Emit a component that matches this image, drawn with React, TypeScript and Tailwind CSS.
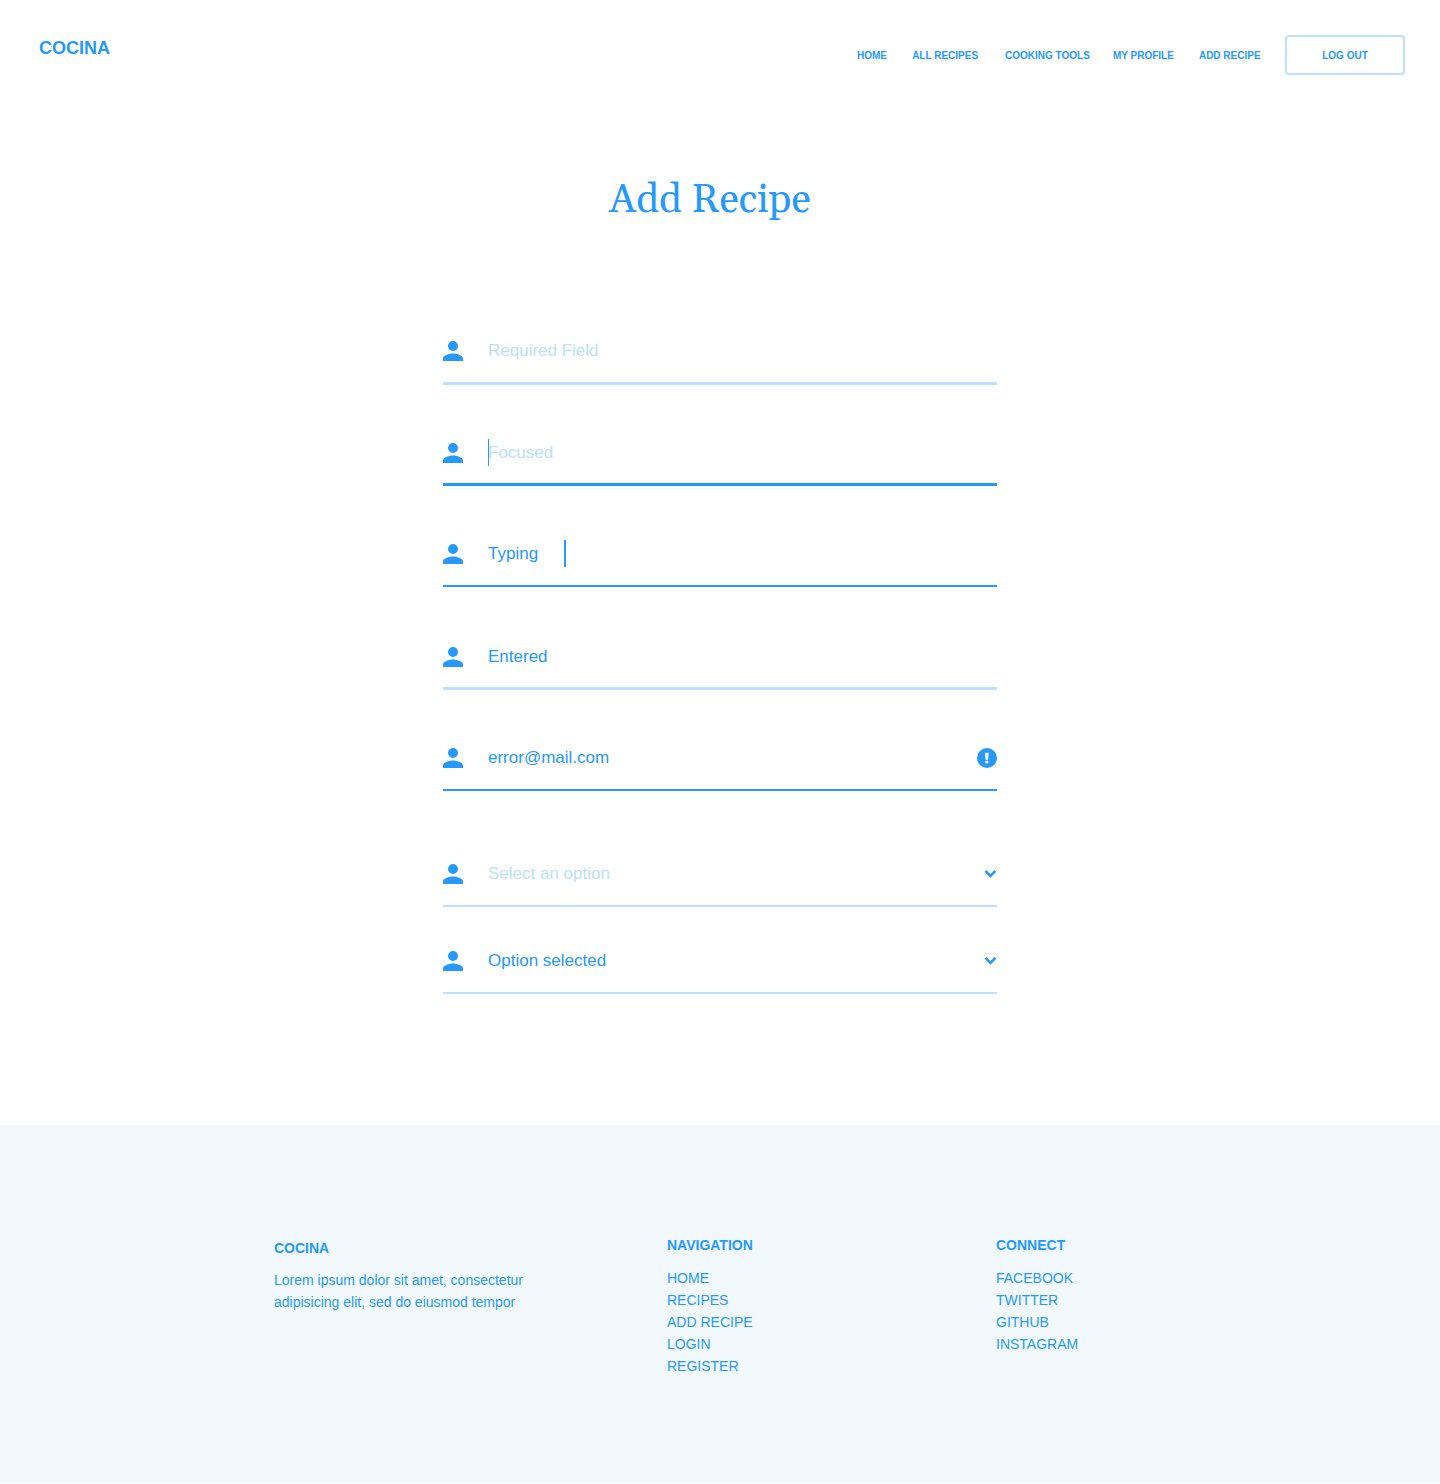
import React from "react";

function PersonIcon() {
  return (
    <svg className="mt-1 size-5 shrink-0" viewBox="0 0 20 20" fill="#2699fb" aria-hidden="true">
      <path d="M10 10A5 5 0 1 0 5 5a5 5 0 0 0 5 5Zm0 2.5c-3.3 0-10 1.7-10 5V20h20v-2.5c0-3.3-6.7-5-10-5Z" />
    </svg>
  );
}

function ErrorIcon() {
  return (
    <svg className="mt-1 ml-auto size-5 shrink-0" viewBox="0 0 20 20" aria-hidden="true">
      <circle cx="10" cy="10" r="10" fill="#2699fb" />
      <path d="M8 4.7h3.7l-.6 7H8.6Z" fill="#fff" />
      <rect x="8.4" y="12.7" width="2.9" height="2.5" rx=".5" fill="#fff" />
    </svg>
  );
}

function ChevronIcon() {
  return (
    <svg className="mt-[9px] ml-auto h-2.5 w-[13px] shrink-0" viewBox="0 0 13 10" fill="none" aria-hidden="true">
      <path d="M1.5 1.9 6.45 6.9 11.4 1.9" stroke="#2699fb" strokeWidth="2.6" />
    </svg>
  );
}

type FieldProps = {
  text: string;
  row: string;
  line: string;
  muted?: boolean;
  caret?: React.ReactNode;
  trailing?: React.ReactNode;
};

function Field({ text, row, line, muted, caret, trailing }: FieldProps) {
  return (
    <div className={row}>
      <div className="flex h-[27px] items-start">
        <PersonIcon />
        <div className="relative ml-[25px] flex text-[17px] leading-[27px]">
          <span className={muted ? "text-[#bce0fd]" : "text-[#2699fb]"}>{text}</span>
          {caret}
        </div>
        {trailing}
      </div>
      <div className={line} />
    </div>
  );
}

function LinkList({ title, links }: { title: string; links: string[] }) {
  return (
    <div>
      <h2 className="font-bold">{title}</h2>
      <ul className="mt-[11px]">
        {links.map((l) => (
          <li key={l}>{l}</li>
        ))}
      </ul>
    </div>
  );
}

export default function App() {
  return (
    <div className="h-[1484px] w-[1440px] overflow-hidden bg-white font-['Liberation_Sans',Arial,sans-serif] text-[#2699fb]">
      <header className="flex h-[110px] items-start pr-[35px] pl-[39px]">
        <div className="mt-[37px] text-[18px] leading-[22px] font-bold">COCINA</div>
        <nav className="mt-[35px] ml-auto flex h-10 items-center text-[10px] leading-4 font-bold whitespace-nowrap">
          <a className="mr-[25.2px] pt-0.5">HOME</a>
          <a className="mr-[27px] pt-0.5">ALL RECIPES</a>
          <a className="mr-[23px] pt-0.5">COOKING TOOLS</a>
          <a className="mr-[25.1px] pt-0.5">MY PROFILE</a>
          <a className="mr-[24.4px] pt-0.5">ADD RECIPE</a>
          <button className="flex h-10 w-[120px] items-center justify-center rounded border-2 border-[#bce0fd] pt-0.5">
            LOG OUT
          </button>
        </nav>
      </header>

      <main className="h-[1015px]">
        <h1 className="mr-5 pt-[66px] text-center font-[Georgia,Gelasio,'Liberation_Serif',serif] text-[40px] leading-[49px]">
          Add Recipe
        </h1>
        <form className="mx-auto mt-[112px] w-[554px]">
          <Field text="Required Field" muted row="mb-[54px]" line="mt-[18px] h-[3px] bg-[#bce0fd]" />
          <Field
            text="Focused"
            muted
            row="mb-[54px]"
            line="mt-[17px] h-[3px] bg-[#2699fb]"
            caret={<span className="absolute top-0 left-0 h-[27px] w-px bg-[#2699fb]" />}
          />
          <Field
            text="Typing"
            row="mb-[56px]"
            line="mt-[18px] h-[2px] bg-[#2699fb]"
            caret={<span className="absolute top-0 left-[76px] h-[27px] w-0.5 bg-[#2699fb]" />}
          />
          <Field text="Entered" row="mb-[54px]" line="mt-[17px] h-[3px] bg-[#bce0fd]" />
          <Field text="error@mail.com" row="mb-[69px]" line="mt-[18px] h-[2px] bg-[#2699fb]" trailing={<ErrorIcon />} />
          <Field text="Select an option" muted row="mb-10" line="mt-[18px] h-[2px] bg-[#bce0fd]" trailing={<ChevronIcon />} />
          <Field text="Option selected" row="" line="mt-[18px] h-[2px] bg-[#bce0fd]" trailing={<ChevronIcon />} />
        </form>
      </main>

      <footer className="flex h-[358px] bg-[#f1f9ff] pt-[109px] pl-[274px] text-[14px] leading-[22px]">
        <div className="mt-[3px] w-[393px]">
          <h2 className="font-bold">COCINA</h2>
          <p className="mt-2.5 w-[260px]">Lorem ipsum dolor sit amet, consectetur adipisicing elit, sed do eiusmod tempor</p>
        </div>
        <div className="w-[329px]">
          <LinkList title="NAVIGATION" links={["HOME", "RECIPES", "ADD RECIPE", "LOGIN", "REGISTER"]} />
        </div>
        <LinkList title="CONNECT" links={["FACEBOOK", "TWITTER", "GITHUB", "INSTAGRAM"]} />
      </footer>
    </div>
  );
}
